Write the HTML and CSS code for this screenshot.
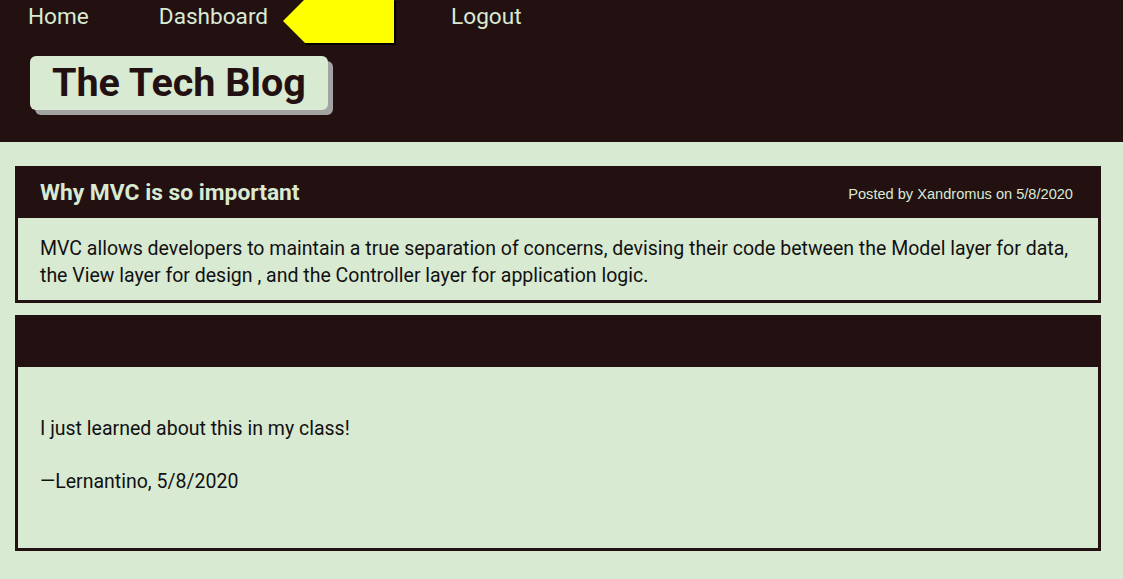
FILE: index.html
```html
<!DOCTYPE html>
<html lang="en">
<head>
<meta charset="utf-8">
<title>The Tech Blog</title>
<link rel="stylesheet" href="styles.css">
</head>
<body>
<header class="site-header">
  <nav class="nav">
    <a class="nav-link nav-home" href="#">Home</a>
    <a class="nav-link nav-dash" href="#">Dashboard</a>
    <a class="nav-link nav-logout" href="#">Logout</a>
    <svg class="pointer" width="116" height="48" viewBox="0 0 116 48" aria-hidden="true">
      <polygon points="2,23 24,1 113,1 113,45 24,45" fill="#000000"/>
      <polygon points="0,21 22,-1 111,-1 111,43 22,43" fill="#ffff00"/>
    </svg>
  </nav>
  <div class="brand"><h1 class="brand-title">The Tech Blog</h1></div>
</header>
<main class="content">
  <article class="card">
    <div class="card-head">
      <h2 class="card-title">Why MVC is so important</h2>
      <span class="card-meta">Posted by Xandromus on 5/8/2020</span>
    </div>
    <div class="card-body">
      <p class="post-text">MVC allows developers to maintain a true separation of concerns, devising their code between the Model layer for data, the View layer for design , and the Controller layer for application logic.</p>
    </div>
  </article>
  <article class="card">
    <div class="card-head card-head-empty"></div>
    <div class="card-body comment-body">
      <p class="comment-text">I just learned about this in my class!</p>
      <p class="comment-author">—Lernantino, 5/8/2020</p>
    </div>
  </article>
</main>
</body>
</html>
```
FILE: styles.css
```css
* { box-sizing: border-box; }
html, body { margin: 0; padding: 0; }
body {
  background: #d9ead3;
  font-family: Roboto, "Noto Sans", sans-serif;
  color: #111;
}
.site-header {
  background: #231112;
  height: 142px;
}
.nav {
  position: relative;
  display: flex;
  align-items: flex-start;
  height: 34px;
  padding-left: 28px;
}
.nav-link {
  color: #d9ead3;
  text-decoration: none;
  font-size: 22.6px;
  line-height: 34px;
}
.nav-dash { margin-left: 70px; }
.nav-logout { margin-left: 183px; }
.pointer {
  position: absolute;
  left: 283px;
  top: 0;
}
.brand {
  padding: 22px 0 0 30px;
}
.brand-title {
  display: inline-block;
  margin: 0;
  background: #d9ead3;
  color: #231112;
  font-size: 39.5px;
  font-weight: 700;
  line-height: 54px;
  height: 54px;
  padding: 0 22px;
  border-radius: 6px;
  box-shadow: 5px 5px 0 #a3a3a3;
}
.content {
  padding: 24px 22px 0 15px;
  display: flex;
  flex-direction: column;
  gap: 12px;
}
.card {
  border: 3px solid #231112;
  border-top: 0;
  background: #d9ead3;
}
.card-head {
  background: #231112;
  height: 52px;
  display: flex;
  align-items: center;
  justify-content: space-between;
  padding: 0 24px 0 21px;
  border: 1px solid #231112;
}
.card-title {
  margin: 0;
  color: #d9ead3;
  font-size: 22.8px;
  font-weight: 700;
}
.card-meta {
  color: #d9ead3;
  font-family: "Liberation Sans", Arial, sans-serif;
  font-size: 14.6px;
  padding-top: 3px;
}
.card-body {
  padding: 17px 22px 11px 22px;
}
.post-text {
  margin: 0;
  font-size: 19.5px;
  line-height: 27px;
}
.comment-body {
  padding: 48px 22px 53px 22px;
}
.comment-text, .comment-author {
  margin: 0;
  font-size: 19.5px;
  line-height: 27px;
}
.comment-author { margin-top: 26px; }
```
